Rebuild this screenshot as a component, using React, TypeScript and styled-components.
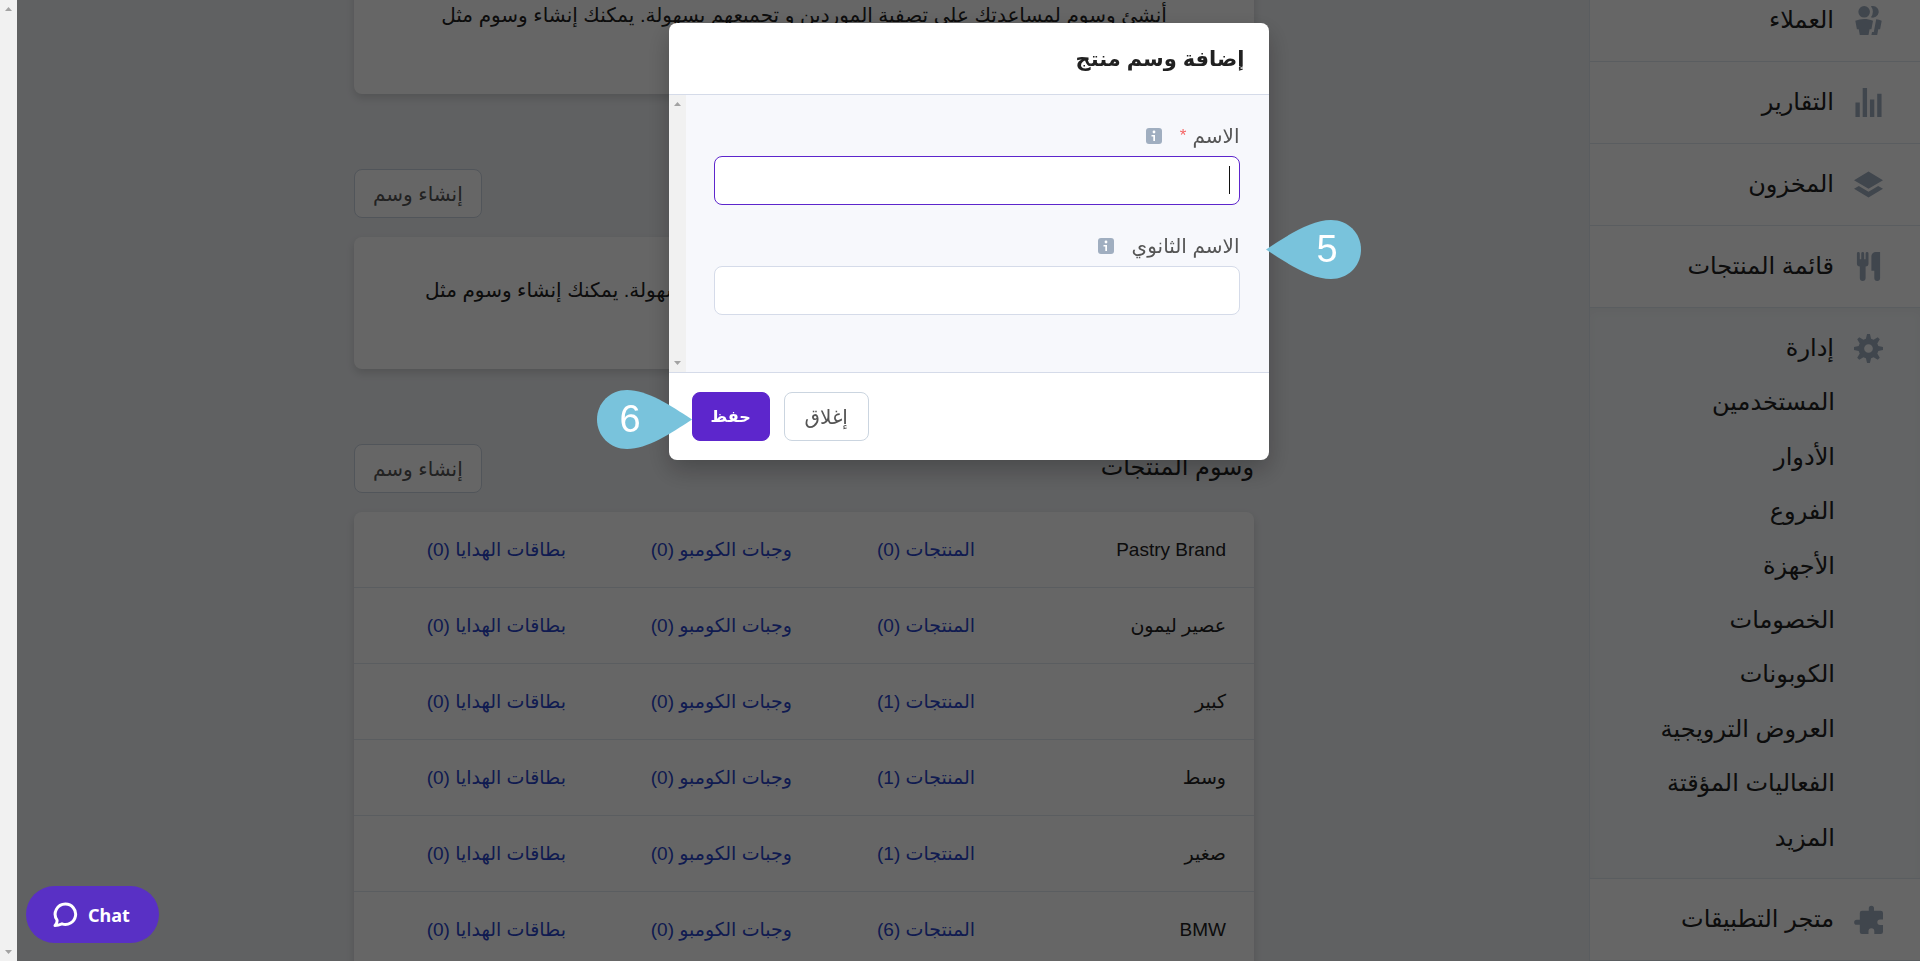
import React from "react";
import styled, { createGlobalStyle, css } from "styled-components";

const FONT = '"Liberation Sans", "DejaVu Sans", sans-serif';

const GlobalStyle = createGlobalStyle`
  *, *::before, *::after { box-sizing: border-box; }
  html, body { margin: 0; height: 100%; overflow: hidden; }
  body { font-family: ${FONT}; background: #f0f2f5; color: #212121; }
  #root { height: 100%; }
  button, input { font-family: inherit; }
  a { text-decoration: none; color: inherit; }
  ul { list-style: none; margin: 0; padding: 0; }
`;

const Page = styled.div`
  display: flex;
  height: 100vh;
  overflow: hidden;
`;

const Sidebar = styled.nav`
  flex: none;
  width: 331px;
  margin-top: -20px;
  border-left: 1px solid #e2e8f0;
  background: #fff;
  white-space: nowrap;
`;

const NavLink = styled.a`
  display: flex;
  align-items: center;
  gap: 20px;
  height: 82px;
  padding: 0 37px;
  border-bottom: 1px solid #e2e8f0;
  font-size: 24px;
`;

const NavLabel = styled.span`
  padding-bottom: 2px;
  line-height: 32px;
`;

const NavIcon = styled.svg`
  flex: none;
  width: 29px;
  height: 29px;
  fill: #a0aec0;
`;

const Section = styled.div`
  height: 571px;
  background: #f7fafc;
  border-bottom: 1px solid #e2e8f0;
  box-shadow: inset 0 4px 8px rgba(0, 0, 0, 0.03);
`;

const SectionLink = styled(NavLink)`
  height: 67px;
  padding-top: 14px;
  border-bottom: 0;
`;

const SubList = styled.ul`
  display: flex;
  flex-direction: column;
  height: 490px;
  padding: 0 85px;
`;

const SubItem = styled.li`
  flex: 1;
  display: flex;
  align-items: center;
  font-size: 24px;
`;

const Main = styled.main`
  flex: 1;
  min-width: 0;
  padding: 0 24px 0 26px;
`;

const Content = styled.div`
  max-width: 900px;
  margin: -38px auto 0;
`;

const cardLook = css`
  background: #fff;
  border-radius: 8px;
  box-shadow: 0 4px 8px rgba(0, 0, 0, 0.14);
`;

const EmptyCard = styled.div`
  ${cardLook}
  height: 132px;
  padding: 36px 24px 0;
  text-align: center;
  font-size: 20px;
  line-height: 34px;
`;

const GroupHeader = styled.header`
  display: flex;
  align-items: center;
  justify-content: space-between;
  margin: 75px 0 19px;
  height: 49px;
`;

const GroupTitle = styled.h2`
  margin: 0;
  padding-bottom: 4px;
  font-size: 24px;
  font-weight: 400;
`;

const Button = styled.button<{ $primary?: boolean }>`
  height: 49px;
  min-width: ${(p) => (p.$primary ? 78 : 85)}px;
  padding: 0 18px;
  border: 1px solid ${(p) => (p.$primary ? "#5d26cc" : "#cbd5e0")};
  border-radius: 8px;
  background: ${(p) => (p.$primary ? "#5d26cc" : "#fff")};
  color: ${(p) => (p.$primary ? "#fff" : "#555")};
  font-size: ${(p) => (p.$primary ? 16 : 20)}px;
  font-weight: ${(p) => (p.$primary ? 700 : 400)};
`;

const Table = styled.table`
  ${cardLook}
  width: 100%;
  table-layout: fixed;
  border-collapse: separate;
  border-spacing: 0;
  font-size: 19px;
`;

const Cell = styled.td<{ $width?: number }>`
  ${(p) => p.$width && `width: ${p.$width}px;`}
  height: 76px;
  padding: 0 28px;
  border-bottom: 1px solid #e2e8f0;
  text-align: start;
  white-space: nowrap;
`;

const CountLink = styled.a`
  color: #2a45c9;
`;

const ScrollTrack = styled.div`
  flex: none;
  display: flex;
  flex-direction: column;
  justify-content: space-between;
  align-items: center;
  width: 17px;
  padding: 7px 0;
  background: #f1f1f1;
`;

const ScrollArrow = styled.svg`
  width: 7px;
  height: 4px;
  fill: #a3a3a3;
`;

const PageScroll = styled(ScrollTrack)`
  position: relative;
  z-index: 2;
`;

const Overlay = styled.div`
  position: fixed;
  inset: 0 0 0 17px;
  z-index: 1;
  display: flex;
  align-items: flex-start;
  justify-content: center;
  padding-top: 23px;
  background: rgba(0, 0, 0, 0.6);
`;

const Dialog = styled.div`
  position: relative;
  width: 600px;
  border-radius: 8px;
  background: #fff;
  box-shadow: 0 10px 24px rgba(0, 0, 0, 0.25);
`;

const DialogHeader = styled.header`
  display: flex;
  align-items: center;
  height: 72px;
  padding: 0 24px;
  border-bottom: 1px solid #d5dbe9;
`;

const DialogTitle = styled.h1`
  margin: 0;
  font-size: 21px;
  font-weight: 700;
`;

const DialogBody = styled.div`
  display: flex;
  height: 277px;
  background: #f7f8fc;
`;

const Fields = styled.form`
  flex: 1;
  display: flex;
  flex-direction: column;
  gap: 28px;
  padding: 28px 29px 28px 28px;
`;

const Field = styled.div`
  display: flex;
  flex-direction: column;
  gap: 8px;
`;

const LabelRow = styled.div`
  display: flex;
  align-items: center;
  height: 25px;
  font-size: 20px;
  line-height: 24px;
  color: #555;
`;

const Required = styled.span`
  margin-inline-start: 6px;
  color: #f56565;
  font-size: 17px;
`;

const InfoIcon = styled.svg`
  width: 16px;
  height: 16px;
  margin-inline-start: 18px;
`;

const InputWrap = styled.div`
  position: relative;
  display: flex;
`;

const Input = styled.input`
  width: 100%;
  height: 49px;
  padding: 0 10px;
  border: 1px solid #d5dbe9;
  border-radius: 8px;
  background: #fff;
  font-size: 20px;
  caret-color: transparent;
  outline: none;
  &:focus { border-color: #5d26cc; }
  & + span { display: none; }
  &:focus:placeholder-shown + span { display: block; }
`;

const Caret = styled.span`
  position: absolute;
  inset-inline-start: 10px;
  top: 10px;
  width: 1px;
  height: 28px;
  background: #111;
`;

const DialogFooter = styled.footer`
  display: flex;
  justify-content: flex-end;
  gap: 14px;
  padding: 19px 23px;
  border-top: 1px solid #d5dbe9;
`;

const Marker = styled.div<{ $side: "start" | "end" }>`
  position: absolute;
  display: grid;
  place-items: center;
  width: 95px;
  height: 59px;
  ${(p) => (p.$side === "start" ? "left: 597px; top: 197px;" : "right: 577px; top: 367px;")}
  color: #fff;
  font-size: 38px;
  line-height: 59px;
`;

const MarkerShape = styled.svg`
  grid-area: 1 / 1;
  width: 95px;
  height: 59px;
  fill: #79c3dc;
`;

const MarkerText = styled.span<{ $side: "start" | "end" }>`
  grid-area: 1 / 1;
  z-index: 1;
  ${(p) => (p.$side === "start" ? "padding-left: 28px;" : "padding-right: 28px;")}
`;

const ChatButton = styled.button`
  position: fixed;
  left: 26px;
  bottom: 18px;
  z-index: 3;
  display: flex;
  align-items: center;
  gap: 10px;
  width: 133px;
  height: 57px;
  padding: 0 26px;
  border: 0;
  border-radius: 29px;
  background: #5930c5;
  color: #fff;
  font: 700 18px "Noto Sans", sans-serif;
`;

const icons = {
  users:
    "M7 8a4 4 0 1 1 0-8 4 4 0 0 1 0 8zm0 1c2.15 0 4.2.4 6.1 1.09L12 16h-1.25L10 20H4l-.75-4H2L.9 10.09A17.93 17.93 0 0 1 7 9zm8.31.17c1.32.18 2.59.48 3.8.92L18 16h-1.25L16 20h-3.96l.37-2h1.25l1.65-8.83zM13 0a4 4 0 1 1-1.33 7.76 5.96 5.96 0 0 0 0-7.52C12.1.1 12.53 0 13 0z",
  chart: "M1 10h3v10H1V10zM6 0h3v20H6V0zm5 8h3v12h-3V8zm5-4h3v16h-3V4z",
  layers: "M10 1l10 6-10 6L0 7l10-6zm6.67 10L20 13l-10 6-10-6 3.33-2L10 15l6.67-4z",
  food: "M18 11v7a2 2 0 0 1-4 0v-5h-2V3a3 3 0 0 1 3-3h3v11zM4 10a2 2 0 0 1-2-2V1a1 1 0 0 1 2 0v4h1V1a1 1 0 0 1 2 0v4h1V1a1 1 0 0 1 2 0v7a2 2 0 0 1-2 2v8a2 2 0 0 1-4 0v-8z",
  cog: "M3.94 6.5L2.22 3.64l1.42-1.42L6.5 3.94c.52-.3 1.1-.54 1.7-.7L9 0h2l.8 3.24c.6.16 1.18.4 1.7.7l2.86-1.72 1.42 1.42-1.72 2.86c.3.52.54 1.1.7 1.7L20 9v2l-3.24.8c-.16.6-.4 1.18-.7 1.7l1.72 2.86-1.42 1.42-2.86-1.72c-.52.3-1.1.54-1.7.7L11 20H9l-.8-3.24c-.6-.16-1.18-.4-1.7-.7l-2.86 1.72-1.42-1.42 1.72-2.86c-.3-.52-.54-1.1-.7-1.7L0 11V9l3.24-.8c.16-.6.4-1.18.7-1.7zM10 13a3 3 0 1 0 0-6 3 3 0 0 0 0 6z",
  puzzle:
    "M10.200 4V2.300a1.800 1.800 0 1 1 3.600 0V4H18.500A1.500 1.500 0 0 1 20 5.500V10H18a1.900 1.900 0 1 0 0 3.800h2v4.700a1.500 1.500 0 0 1-1.500 1.500H14v-2a2 2 0 1 0-4 0v2H5.500A1.500 1.500 0 0 1 4 18.500v-4.800H1.900a1.800 1.800 0 1 1 0-3.600H4V5.500A1.500 1.500 0 0 1 5.500 4z",
};

const Icon = ({ name }: { name: keyof typeof icons }) => (
  <NavIcon viewBox="0 0 20 20" aria-hidden="true">
    <path d={icons[name]} />
  </NavIcon>
);

const Arrows = () => (
  <>
    <ScrollArrow viewBox="0 0 7 4"><path d="M0 4 3.500 0 7 4z" /></ScrollArrow>
    <ScrollArrow viewBox="0 0 7 4"><path d="M0 0h7L3.500 4z" /></ScrollArrow>
  </>
);

const Info = () => (
  <InfoIcon viewBox="0 0 16 16" role="img" aria-label="معلومات">
    <rect width="16" height="16" rx="3" fill="#a0aec0" />
    <circle cx="8" cy="4" r="1.400" fill="#fff" />
    <path d="M5.500 7H9v6H7.300V8.500H5.500z" fill="#fff" />
  </InfoIcon>
);

const topLinks: { label: string; icon: keyof typeof icons }[] = [
  { label: "العملاء", icon: "users" },
  { label: "التقارير", icon: "chart" },
  { label: "المخزون", icon: "layers" },
  { label: "قائمة المنتجات", icon: "food" },
];

const manageLinks = [
  "المستخدمين",
  "الأدوار",
  "الفروع",
  "الأجهزة",
  "الخصومات",
  "الكوبونات",
  "العروض الترويجية",
  "الفعاليات المؤقتة",
  "المزيد",
];

const tags: [string, number][] = [
  ["Pastry Brand", 0],
  ["عصير ليمون", 0],
  ["كبير", 1],
  ["وسط", 1],
  ["صغير", 1],
  ["BMW", 6],
];

export default function App() {
  return (
    <>
      <GlobalStyle />
      <Page dir="rtl" lang="ar">
        <Sidebar>
          {topLinks.map((l) => (
            <NavLink href="#" key={l.label}>
              <Icon name={l.icon} />
              <NavLabel>{l.label}</NavLabel>
            </NavLink>
          ))}
          <Section>
            <SectionLink href="#">
              <Icon name="cog" />
              <NavLabel>إدارة</NavLabel>
            </SectionLink>
            <SubList>
              {manageLinks.map((l) => (
                <SubItem key={l}>
                  <a href="#">{l}</a>
                </SubItem>
              ))}
            </SubList>
          </Section>
          <NavLink href="#">
            <Icon name="puzzle" />
            <NavLabel>متجر التطبيقات</NavLabel>
          </NavLink>
        </Sidebar>

        <Main>
          <Content>
            <EmptyCard>
              أنشئ وسوم لمساعدتك على تصفية الموردين و تجميعهم بسهولة. يمكنك إنشاء وسوم مثل
            </EmptyCard>
            <GroupHeader>
              <GroupTitle>وسوم أوامر الشراء</GroupTitle>
              <Button type="button">إنشاء وسم</Button>
            </GroupHeader>
            <EmptyCard>
              أنشئ وسوم لمساعدتك على تصفية مواد المخزون و تجميعها بسهولة. يمكنك إنشاء وسوم مثل
            </EmptyCard>
            <GroupHeader>
              <GroupTitle>وسوم المنتجات</GroupTitle>
              <Button type="button">إنشاء وسم</Button>
            </GroupHeader>
            <Table>
              <tbody>
                {tags.map(([name, count]) => (
                  <tr key={name}>
                    <Cell $width={251}>{name}</Cell>
                    <Cell $width={183}><CountLink href="#">المنتجات ({count})</CountLink></Cell>
                    <Cell $width={226}><CountLink href="#">وجبات الكومبو (0)</CountLink></Cell>
                    <Cell><CountLink href="#">بطاقات الهدايا (0)</CountLink></Cell>
                  </tr>
                ))}
              </tbody>
            </Table>
          </Content>
        </Main>
        <PageScroll><Arrows /></PageScroll>

        <Overlay>
          <Dialog role="dialog" aria-modal="true" aria-labelledby="dialog-title">
            <DialogHeader>
              <DialogTitle id="dialog-title">إضافة وسم منتج</DialogTitle>
            </DialogHeader>
            <DialogBody>
              <Fields id="tag-form">
                <Field>
                  <LabelRow>
                    <label htmlFor="name">الاسم</label>
                    <Required>*</Required>
                    <Info />
                  </LabelRow>
                  <InputWrap>
                    <Input id="name" placeholder=" " autoFocus />
                    <Caret />
                  </InputWrap>
                </Field>
                <Field>
                  <LabelRow>
                    <label htmlFor="name-2">الاسم الثانوي</label>
                    <Info />
                  </LabelRow>
                  <InputWrap>
                    <Input id="name-2" placeholder=" " />
                    <Caret />
                  </InputWrap>
                </Field>
              </Fields>
              <ScrollTrack><Arrows /></ScrollTrack>
            </DialogBody>
            <DialogFooter>
              <Button type="button">إغلاق</Button>
              <Button type="submit" form="tag-form" $primary>حفظ</Button>
            </DialogFooter>
            <Marker $side="start">
              <MarkerShape viewBox="0 0 95 59">
                <path d="M0 29.500C22 15 45 0 65 0 82 0 95 13 95 29.500S82 59 65 59C45 59 22 44 0 29.500z" />
              </MarkerShape>
              <MarkerText $side="start">5</MarkerText>
            </Marker>
            <Marker $side="end">
              <MarkerShape viewBox="0 0 95 59">
                <path d="M95 29.500C73 15 50 0 30 0 13 0 0 13 0 29.500S13 59 30 59C50 59 73 44 95 29.500z" />
              </MarkerShape>
              <MarkerText $side="end">6</MarkerText>
            </Marker>
          </Dialog>
        </Overlay>

        <ChatButton type="button" dir="ltr">
          <svg width="26" height="26" viewBox="0 0 26 26" fill="none" stroke="#fff" strokeWidth="3" strokeLinejoin="round" aria-hidden="true">
            <path d="M13.500 2a10.200 10.200 0 1 1-3.500 19.800Q6 23.500 3 23.500Q5.500 21 5 18A10.200 10.200 0 0 1 13.500 2z" />
          </svg>
          Chat
        </ChatButton>
      </Page>
    </>
  );
}
